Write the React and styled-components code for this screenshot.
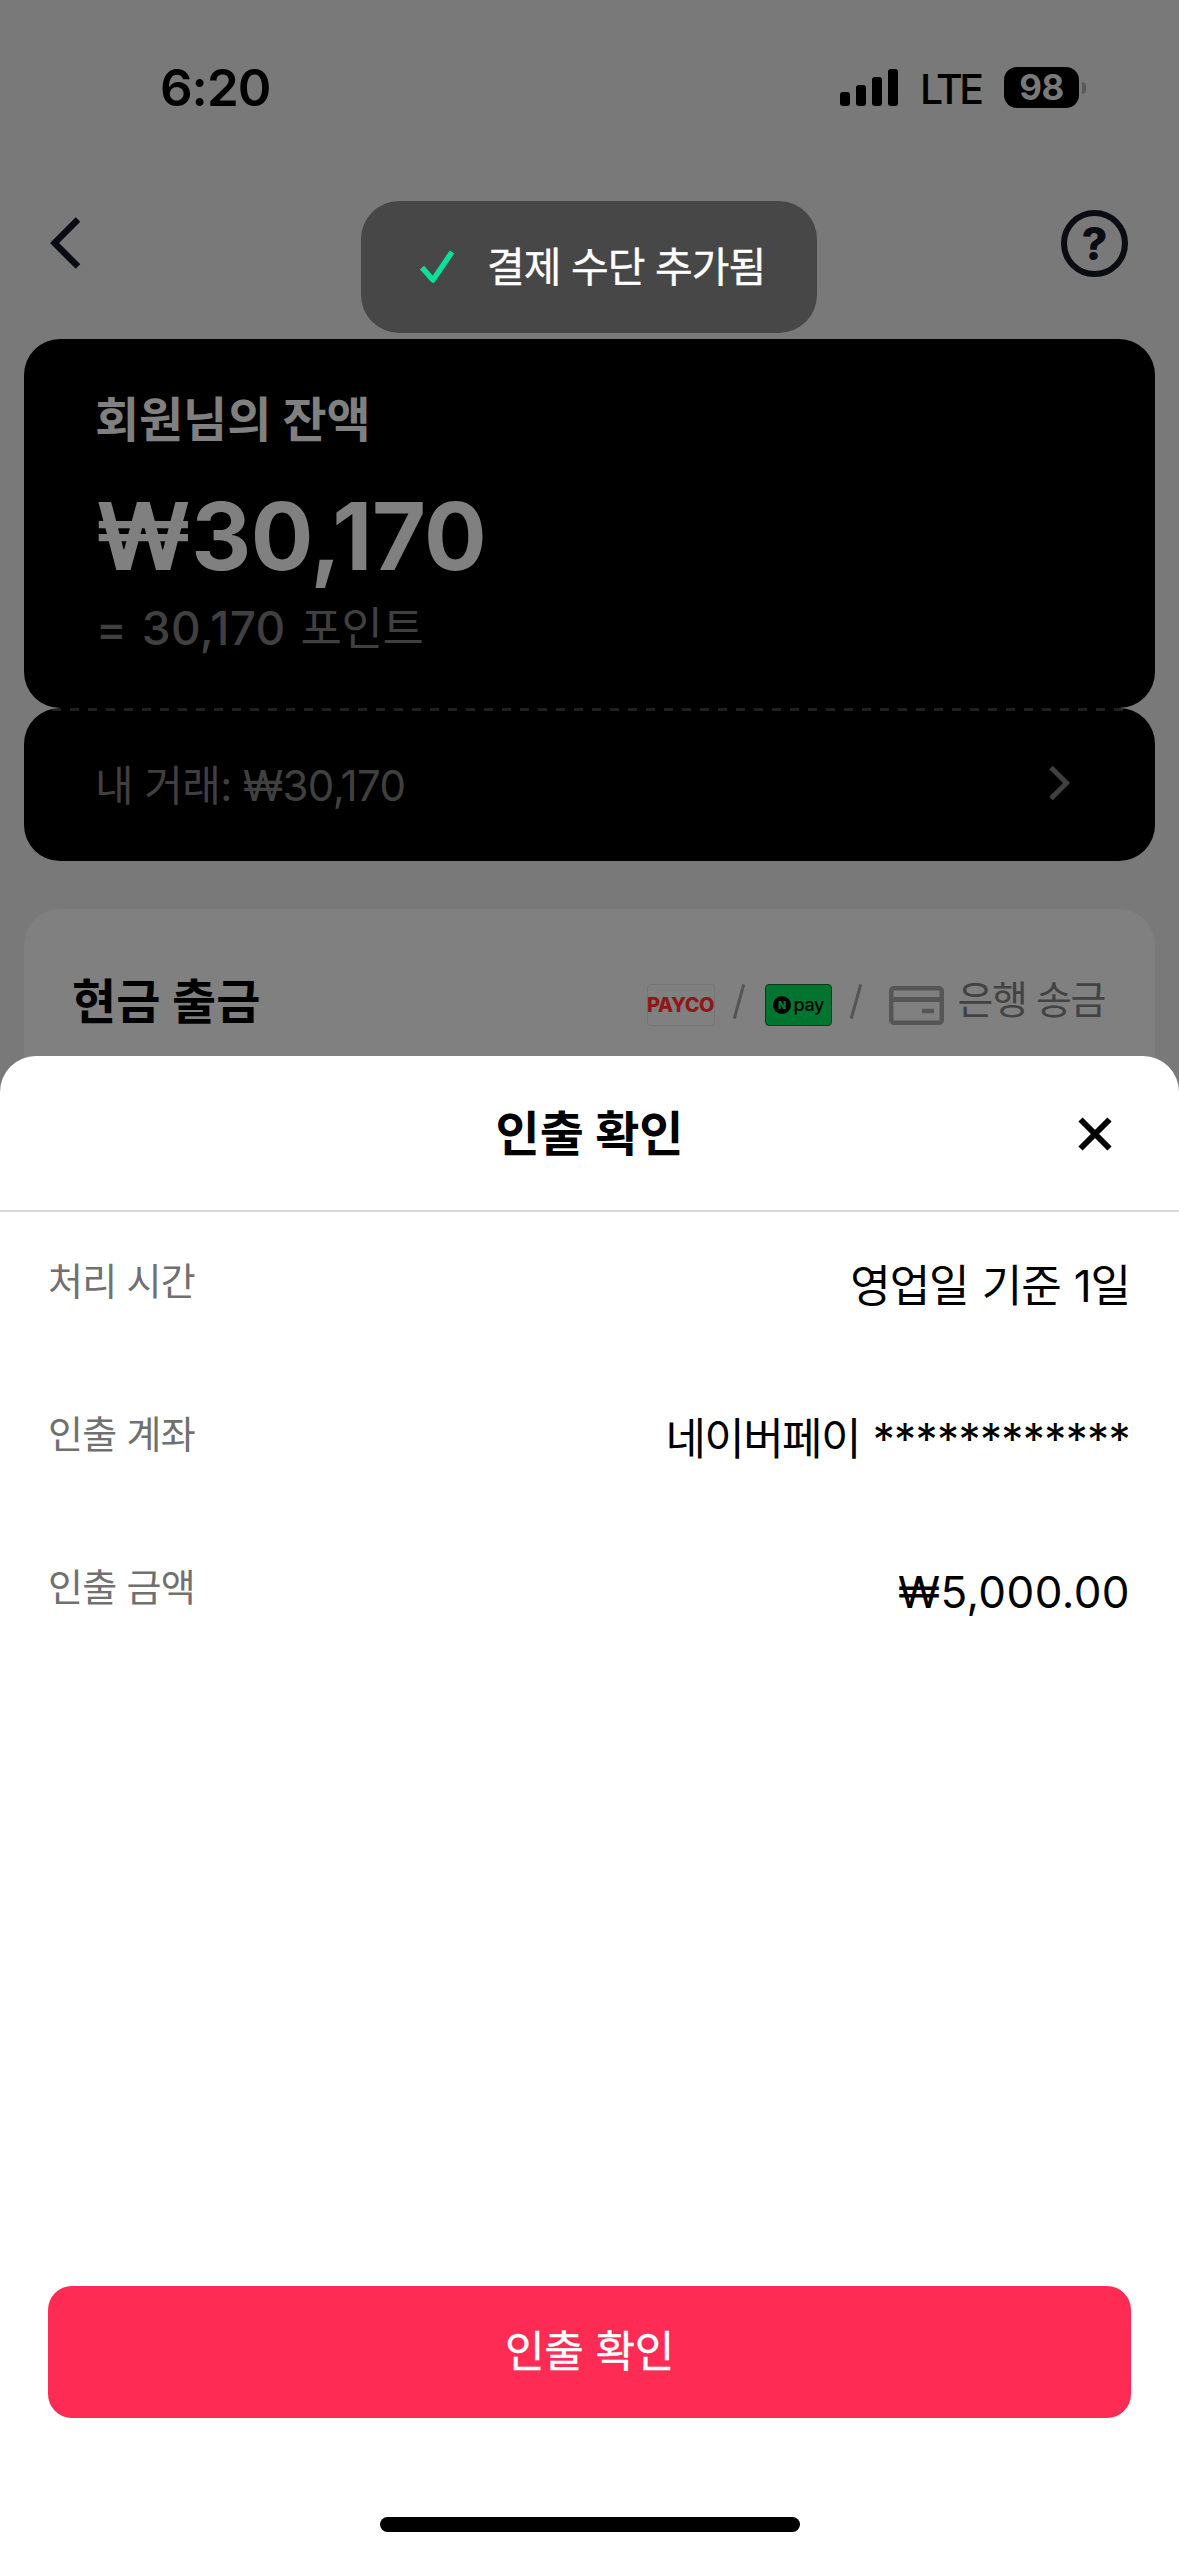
import React from 'react';
import styled, { createGlobalStyle } from 'styled-components';

const GlobalStyle = createGlobalStyle`
  * {
    box-sizing: border-box;
    margin: 0;
    padding: 0;
  }

  body {
    font-family: Inter, 'Noto Sans CJK KR', sans-serif;
    background: #797979;
  }

  button {
    border: none;
    background: none;
    font-family: inherit;
  }

  svg {
    display: block;
    flex-shrink: 0;
  }
`;

const Screen = styled.div`
  position: relative;
  width: 1179px;
  height: 2556px;
  overflow: hidden;
  background: #797979;
`;

const StatusBar = styled.div`
  height: 175px;
  padding: 0 93px 0 160px;
  display: flex;
  align-items: center;
  justify-content: space-between;
`;

const Time = styled.span`
  font-size: 51px;
  line-height: 60px;
  font-weight: 600;
  letter-spacing: -1px;
  color: #000;
`;

const StatusIcons = styled.div`
  display: flex;
  align-items: center;
`;

const Signal = styled.div`
  display: flex;
  align-items: flex-end;
  gap: 6px;
  height: 37px;
`;

const SignalBar = styled.span`
  width: 10px;
  height: ${(props) => props.$height}px;
  border-radius: 3px;
  background: #000;
`;

const Network = styled.span`
  margin-left: 22px;
  width: 84px;
  padding-top: 3px;
  font-size: 41px;
  line-height: 48px;
  font-weight: 500;
  letter-spacing: -3.4px;
  color: #000;
`;

const Battery = styled.div`
  width: 75px;
  height: 41px;
  border-radius: 13px;
  background: #000;
  color: #797979;
  font-size: 35px;
  line-height: 41px;
  font-weight: 700;
  letter-spacing: -0.5px;
  text-align: center;
`;

const BatteryNub = styled.span`
  width: 4px;
  height: 12px;
  margin-left: 3px;
  border-radius: 0 4px 4px 0;
  background: #5a5a5a;
`;

const NavBar = styled.div`
  height: 136px;
  margin-bottom: 28px;
  padding: 0 51px 0 50px;
  display: flex;
  align-items: center;
  justify-content: space-between;
`;

const Help = styled.div`
  width: 67px;
  height: 67px;
  border: 6px solid #0b0c13;
  border-radius: 50%;
  color: #0b0c13;
  font-size: 45px;
  line-height: 55px;
  font-weight: 800;
  text-align: center;
`;

const Toast = styled.div`
  position: absolute;
  top: 201px;
  left: 361px;
  width: 456px;
  height: 132px;
  padding-left: 59px;
  display: flex;
  align-items: center;
  gap: 32px;
  border-radius: 38px;
  background: #474747;
`;

const ToastText = styled.span`
  padding-bottom: 1px;
  font-size: 41px;
  line-height: 56px;
  letter-spacing: -1px;
  white-space: nowrap;
  color: #fff;
  -webkit-text-stroke: 0.4px #fff;
`;

const Cards = styled.main`
  padding: 0 24px;
`;

const BalanceCard = styled.section`
  height: 369px;
  padding: 51px 71px 0;
  border-radius: 36px;
  background: #000;
`;

const BalanceLabel = styled.h2`
  font-size: 48px;
  line-height: 60px;
  font-weight: 700;
  letter-spacing: -0.1px;
  color: #808080;
`;

const Balance = styled.p`
  margin-top: 36px;
  font-size: 93px;
  line-height: 100px;
  font-weight: 700;
  letter-spacing: -0.5px;
  color: #808080;
`;

const Points = styled.p`
  margin-top: 12px;
  padding-left: 1px;
  font-size: 46px;
  line-height: 60px;
  font-weight: 500;
  letter-spacing: 0.4px;
  word-spacing: 2px;
  color: #404040;
`;

const PointsUnit = styled.span`
  font-size: 45px;
  font-weight: 400;
  letter-spacing: -0.4px;
`;

const TradesCard = styled.section`
  height: 153px;
  padding: 3px 85px 0 71px;
  display: flex;
  align-items: center;
  justify-content: space-between;
  border-radius: 36px;
  background:
    repeating-linear-gradient(to right, #202020 0 9px, #000 9px 18px) 10px 0 / 100% 3px no-repeat,
    #000;
`;

const Trades = styled.p`
  font-size: 42px;
  line-height: 56px;
  letter-spacing: -0.6px;
  color: #404040;
`;

const TradesLink = styled.span`
  padding-bottom: 6px;
`;

const CashOutCard = styled.section`
  height: 400px;
  margin-top: 48px;
  padding: 62px 50px 0 48px;
  display: flex;
  align-items: flex-start;
  justify-content: space-between;
  border-radius: 36px;
  background: #808080;
`;

const CashOutTitle = styled.h2`
  padding-top: 1px;
  font-size: 48px;
  line-height: 60px;
  font-weight: 700;
  letter-spacing: 0.1px;
  color: #000;
`;

const Methods = styled.div`
  height: 66px;
  display: flex;
  align-items: flex-end;
  padding-bottom: 11px;
`;

const PaycoBadge = styled.span`
  width: 68px;
  height: 42px;
  display: flex;
  align-items: center;
  justify-content: center;
  border: 1px solid #757575;
  border-radius: 4px;
  font-size: 20px;
  font-weight: 800;
  letter-spacing: -0.5px;
  color: #8f1717;
`;

const NpayBadge = styled.span`
  width: 67px;
  height: 42px;
  display: flex;
  align-items: center;
  gap: 3px;
  padding-left: 7px;
  border: 1px solid #0a3a1c;
  border-radius: 4px;
  background: #01742f;
  color: #000;
  font-size: 18px;
  line-height: 20px;
  font-weight: 500;
  letter-spacing: -0.4px;
`;

const SlashIcon = styled.svg`
  margin: 0 20px 7px 18px;
`;

const CardSlot = styled.span`
  margin: 0 0 1px 7px;
`;

const BankText = styled.span`
  margin: 0 0 4px 14px;
  font-size: 39px;
  line-height: 44px;
  letter-spacing: -1.4px;
  color: #434343;
`;

const Sheet = styled.div`
  position: absolute;
  left: 0;
  right: 0;
  bottom: 0;
  height: 1500px;
  display: flex;
  flex-direction: column;
  border-radius: 36px 36px 0 0;
  background: #fff;
`;

const SheetHeader = styled.header`
  height: 156px;
  padding-top: 2px;
  display: grid;
  grid-template-columns: 1fr auto 1fr;
  align-items: center;
  border-bottom: 2px solid #dadada;
`;

const SheetTitle = styled.h1`
  grid-column: 2;
  font-size: 48px;
  line-height: 60px;
  font-weight: 700;
  color: #000;
`;

const CloseButton = styled.button`
  justify-self: end;
  margin-right: 67px;
`;

const Details = styled.dl`
  flex: 1;
  padding: 47px 49px 0 48px;
`;

const Detail = styled.div`
  height: 153px;
  display: flex;
  align-items: flex-start;
  justify-content: space-between;
`;

const DetailLabel = styled.dt`
  font-size: 38px;
  line-height: 44px;
  letter-spacing: -0.7px;
  color: #707070;
`;

const DetailValue = styled.dd`
  padding-top: 2px;
  font-size: 44px;
  line-height: 50px;
  letter-spacing: ${(props) => props.$spacing}px;
  word-spacing: 2px;
  color: #000;
`;

const Mask = styled.span`
  letter-spacing: -0.6px;
`;

const ConfirmButton = styled.button`
  height: 132px;
  margin: 0 48px;
  padding-bottom: 2px;
  border-radius: 24px;
  background: #fe2c55;
  color: #fff;
  font-size: 43px;
  line-height: 60px;
  letter-spacing: -0.3px;
  -webkit-text-stroke: 0.4px #fff;
`;

const HomeIndicator = styled.div`
  width: 420px;
  height: 15px;
  margin: 99px auto 24px;
  border-radius: 8px;
  background: #000;
`;

const signalBars = [14, 21, 29, 37];

const details = [
  { label: '처리 시간', value: '영업일 기준 1일', spacing: -1.1 },
  { label: '인출 계좌', value: '네이버페이 ', mask: '************', spacing: -1.6 },
  { label: '인출 금액', value: '₩5,000.00', spacing: 0.4 },
];

const BackIcon = () => (
  <svg width="32" height="54" viewBox="0 0 32 54" fill="none">
    <path d="M28 3.500L4.500 27L28 50.500" stroke="#0b0c13" strokeWidth="6.500" />
  </svg>
);

const CheckIcon = () => (
  <svg width="35" height="34" viewBox="0 0 35 34" fill="none">
    <path d="M2 17.500L13 30L32 2" stroke="#0be09b" strokeWidth="5.500" strokeLinejoin="round" />
  </svg>
);

const ChevronIcon = () => (
  <svg width="22" height="36" viewBox="0 0 22 36" fill="none">
    <path d="M3 2.500L18.500 18L3 33.500" stroke="#404040" strokeWidth="5" />
  </svg>
);

const Slash = () => (
  <SlashIcon width="12" height="35" viewBox="0 0 12 35">
    <path d="M10.700 0.500L1.300 34.500" stroke="#555" strokeWidth="3" />
  </SlashIcon>
);

const CardIcon = () => (
  <svg width="55" height="39" viewBox="0 0 55 39" fill="none">
    <rect x="2.250" y="2.250" width="50.500" height="34.500" rx="2.500" stroke="#565656" strokeWidth="4.500" />
    <path d="M2 13.500H53" stroke="#565656" strokeWidth="5" />
    <path d="M33 25H45" stroke="#565656" strokeWidth="4.500" />
  </svg>
);

const NaverIcon = () => (
  <svg width="18" height="18" viewBox="0 0 18 18">
    <circle cx="9" cy="9" r="9" fill="#000" />
    <path d="M5.500 13V5H8L10.500 9V5H12.800V13H10.300L7.800 9V13Z" fill="#01742f" />
  </svg>
);

const CloseIcon = () => (
  <svg width="34" height="34" viewBox="0 0 34 34" fill="none">
    <path d="M2.500 2.500L31.500 31.500M31.500 2.500L2.500 31.500" stroke="#000" strokeWidth="6" />
  </svg>
);

const App = () => {
  return (
    <Screen>
      <GlobalStyle />

      <StatusBar>
        <Time>6:20</Time>
        <StatusIcons>
          <Signal>
            {signalBars.map((height) => (
              <SignalBar key={height} $height={height} />
            ))}
          </Signal>
          <Network>LTE</Network>
          <Battery>98</Battery>
          <BatteryNub />
        </StatusIcons>
      </StatusBar>

      <NavBar>
        <BackIcon />
        <Help>?</Help>
      </NavBar>

      <Cards>
        <BalanceCard>
          <BalanceLabel>회원님의 잔액</BalanceLabel>
          <Balance>₩30,170</Balance>
          <Points>
            = 30,170 <PointsUnit>포인트</PointsUnit>
          </Points>
        </BalanceCard>

        <TradesCard>
          <Trades>내 거래: ₩30,170</Trades>
          <TradesLink>
            <ChevronIcon />
          </TradesLink>
        </TradesCard>

        <CashOutCard>
          <CashOutTitle>현금 출금</CashOutTitle>
          <Methods>
            <PaycoBadge>PAYCO</PaycoBadge>
            <Slash />
            <NpayBadge>
              <NaverIcon />
              pay
            </NpayBadge>
            <Slash />
            <CardSlot>
              <CardIcon />
            </CardSlot>
            <BankText>은행 송금</BankText>
          </Methods>
        </CashOutCard>
      </Cards>

      <Toast>
        <CheckIcon />
        <ToastText>결제 수단 추가됨</ToastText>
      </Toast>

      <Sheet>
        <SheetHeader>
          <SheetTitle>인출 확인</SheetTitle>
          <CloseButton aria-label="닫기">
            <CloseIcon />
          </CloseButton>
        </SheetHeader>
        <Details>
          {details.map(({ label, value, mask, spacing }) => (
            <Detail key={label}>
              <DetailLabel>{label}</DetailLabel>
              <DetailValue $spacing={spacing}>
                {value}
                {mask && <Mask>{mask}</Mask>}
              </DetailValue>
            </Detail>
          ))}
        </Details>
        <ConfirmButton>인출 확인</ConfirmButton>
        <HomeIndicator />
      </Sheet>
    </Screen>
  );
};

export default App;
